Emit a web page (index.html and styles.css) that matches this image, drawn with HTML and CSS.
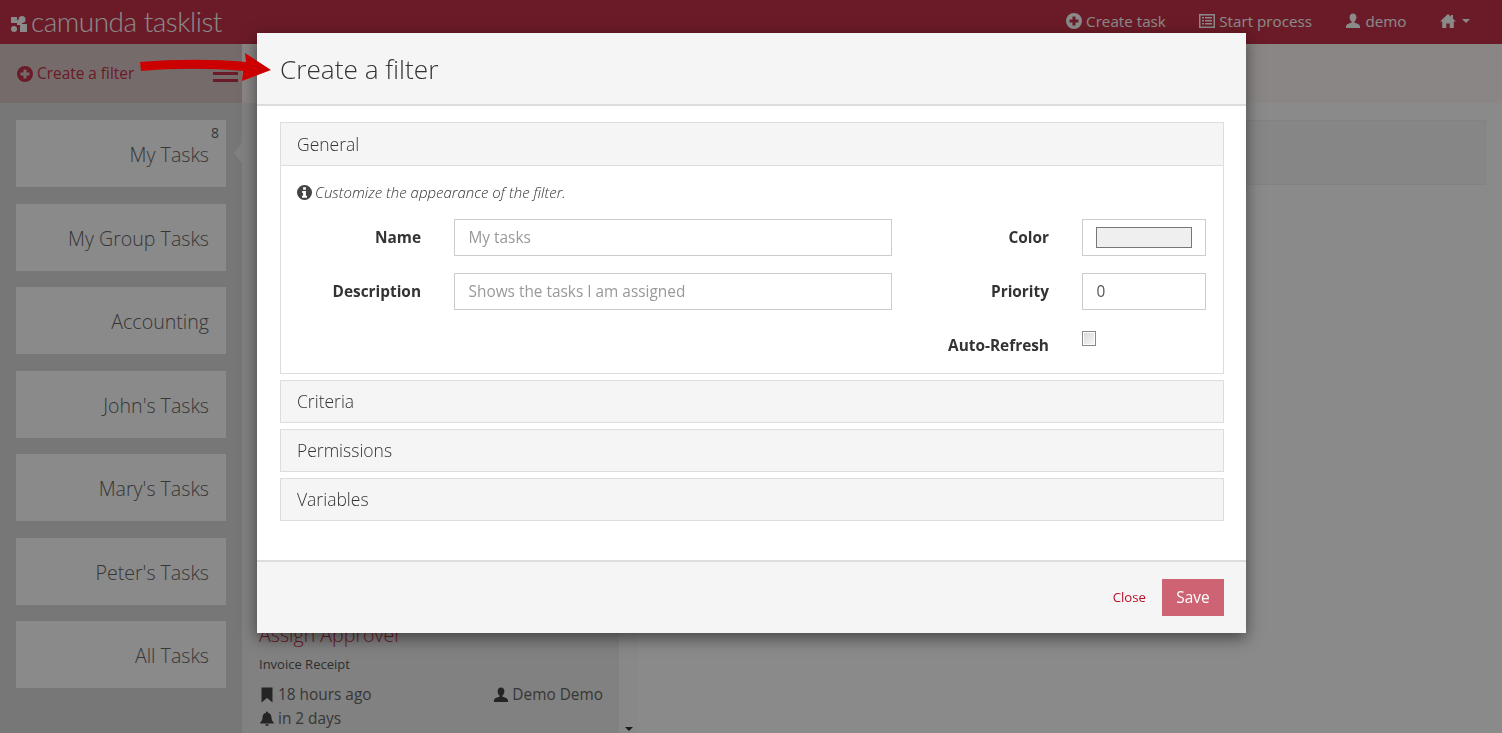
FILE: index.html
```html
<!DOCTYPE html>
<html lang="en">
<head>
    <meta charset="UTF-8">
    <title>Camunda Tasklist</title>
    <link rel="stylesheet" href="styles.css">
</head>
<body>

<svg class="defs" width="0" height="0">
    <symbol id="i-plus" viewBox="0 0 16 16"><path fill-rule="evenodd" d="M8 0a8 8 0 1 0 0 16A8 8 0 0 0 8 0zM6.500 3.500h3v3h3v3h-3v3h-3v-3h-3v-3h3z"/></symbol>
    <symbol id="i-info" viewBox="0 0 16 16"><path fill-rule="evenodd" d="M8 0a8 8 0 1 0 0 16A8 8 0 0 0 8 0zM6.500 2.500h3v2.500h-3zM5.500 6.500h4v5h1.200v2h-5.400v-2h1.200v-3h-1z"/></symbol>
    <symbol id="i-list" viewBox="0 0 16 16"><path fill-rule="evenodd" d="M0 1h16v14H0zM1.500 2.500v11h13v-11zM3 4h2v1.500H3zM6 4h7v1.500H6zM3 7h2v1.500H3zM6 7h7v1.500H6zM3 10h2v1.500H3zM6 10h7v1.500H6z"/></symbol>
    <symbol id="i-user" viewBox="0 0 16 16"><path d="M8 .5c2.100 0 3.400 1.500 3.400 3.700 0 1.800-.8 3.300-1.900 4.200v1.300c2.600.7 5.500 1.600 5.500 3.800v1.500H1v-1.500c0-2.200 2.900-3.100 5.500-3.800V8.400C5.400 7.500 4.600 6 4.600 4.200 4.600 2 5.900.5 8 .5z"/></symbol>
    <symbol id="i-home" viewBox="0 0 16 16"><path d="M8 1l3 2.800V2h2v3.700L16 8.500h-2.200V15H9.700v-4.500H6.300V15H2.200V8.500H0z"/></symbol>
    <symbol id="i-bookmark" viewBox="0 0 16 16"><path d="M2.500 .5h11v15L8 11l-5.500 4.500z"/></symbol>
    <symbol id="i-bell" viewBox="0 0 16 16"><path d="M8 .5a1.100 1.100 0 0 1 1.100 1.200c2.400.6 3.300 2.500 3.400 4.800.1 2.700 1 3.900 2.200 4.900v1.100H1.300v-1.100c1.200-1 2.100-2.200 2.200-4.900.1-2.300 1-4.200 3.400-4.800A1.100 1.100 0 0 1 8 .5zM6.200 13.300h3.600a1.800 1.800 0 0 1-3.600 0z"/></symbol>
</svg>

<header class="navbar">
    <div class="brand">
        <svg class="brand-logo" viewBox="0 0 16 16" width="16" height="16">
            <rect x="0" y="1" width="6" height="6"/>
            <circle cx="11" cy="3.500" r="3.500"/>
            <rect x="6" y="4" width="5" height="5"/>
            <circle cx="3" cy="13" r="3"/>
            <rect x="9" y="8" width="7" height="8"/>
        </svg>
        <span>camunda tasklist</span>
    </div>
    <nav class="nav-links">
        <a><svg class="icon"><use href="#i-plus"/></svg>Create task</a>
        <a><svg class="icon"><use href="#i-list"/></svg>Start process</a>
        <a><svg class="icon"><use href="#i-user"/></svg>demo</a>
        <a class="home-link"><svg class="icon"><use href="#i-home"/></svg><span class="caret"></span></a>
    </nav>
</header>

<div class="subbar">
    <div class="subbar-left">
        <a class="create-filter"><svg class="icon"><use href="#i-plus"/></svg>Create a filter</a>
        <span class="hamburger"></span>
    </div>
</div>

<div class="columns">
    <aside class="filters">
        <div class="filter active"><span class="count">8</span>My Tasks</div>
        <div class="filter">My Group Tasks</div>
        <div class="filter">Accounting</div>
        <div class="filter">John's Tasks</div>
        <div class="filter">Mary's Tasks</div>
        <div class="filter">Peter's Tasks</div>
        <div class="filter">All Tasks</div>
    </aside>
    <section class="tasks">
        <div class="task">
            <h4>Assign Approver</h4>
            <p class="process">Invoice Receipt</p>
            <div class="task-meta">
                <span><svg class="icon"><use href="#i-bookmark"/></svg>18 hours ago</span>
                <span><svg class="icon"><use href="#i-user"/></svg>Demo Demo</span>
            </div>
            <div class="task-meta">
                <span><svg class="icon"><use href="#i-bell"/></svg>in 2 days</span>
            </div>
        </div>
    </section>
    <div class="scroller"><span class="scroll-down"></span></div>
    <main class="detail">
        <div class="detail-box"></div>
    </main>
</div>

<div class="backdrop"></div>

<div class="modal">
    <div class="modal-header">
        <h3>Create a filter</h3>
    </div>
    <div class="modal-body">
        <div class="panel">
            <div class="panel-heading">General</div>
            <div class="panel-body">
                <p class="hint"><svg class="icon"><use href="#i-info"/></svg><em>Customize the appearance of the filter.</em></p>
                <form class="filter-form">
                    <label>Name</label>
                    <input type="text" placeholder="My tasks">
                    <label>Color</label>
                    <input type="color" value="#efefef">

                    <label>Description</label>
                    <input type="text" placeholder="Shows the tasks I am assigned">
                    <label>Priority</label>
                    <input type="text" value="0">

                    <label class="refresh-label">Auto-Refresh</label>
                    <input class="refresh-box" type="checkbox">
                </form>
            </div>
        </div>
        <div class="panel"><div class="panel-heading closed">Criteria</div></div>
        <div class="panel"><div class="panel-heading closed">Permissions</div></div>
        <div class="panel"><div class="panel-heading closed">Variables</div></div>
    </div>
    <div class="modal-footer">
        <a class="close-link">Close</a>
        <button type="button" class="save-btn">Save</button>
    </div>
</div>

<svg class="annotation" width="140" height="34" viewBox="136 50 140 34">
    <path d="M140 62C175 59 215 59 246 62L245 53 271 70 242 81 243 71C210 68 175 68 141 71z"/>
</svg>

</body>
</html>
```

FILE: styles.css
```css
* {
    box-sizing: border-box;
}

html, body {
    height: 100%;
}

body {
    margin: 0;
    font-family: "Open Sans", sans-serif;
    font-size: 15.400px;
    color: #333;
    background-color: #fff;
    overflow: hidden;
}

.defs {
    display: block;
    height: 0;
}

.icon {
    width: 16px;
    height: 16px;
    fill: currentColor;
    flex: none;
}

/* top bar */
.navbar {
    height: 44px;
    background-color: #c63248;
    color: #fff;
    display: flex;
    justify-content: space-between;
    align-items: center;
    padding: 0 32px 2px 11px;
}

.brand {
    display: flex;
    align-items: center;
    gap: 4px;
    font-family: "Lato", sans-serif;
    font-weight: 300;
    font-size: 28px;
    letter-spacing: -0.500px;
}

.brand-logo {
    fill: #fff;
    margin-top: 6px;
}

.nav-links {
    display: flex;
    gap: 33.500px;
    font-size: 15.200px;
}

.nav-links a {
    display: flex;
    align-items: center;
    gap: 4px;
}

.nav-links .home-link {
    gap: 6px;
}

.caret {
    width: 0;
    height: 0;
    border-top: 4px solid #fff;
    border-left: 4px solid transparent;
    border-right: 4px solid transparent;
}

/* bar under the top bar */
.subbar {
    height: 59px;
    background-color: #fff8f8;
}

.subbar-left {
    width: 242px;
    height: 100%;
    background-color: #d9c6c6;
    display: flex;
    justify-content: space-between;
    align-items: center;
    padding: 0 4px 0 17px;
}

.create-filter {
    display: flex;
    align-items: center;
    gap: 4px;
    color: #c63248;
}

.hamburger {
    width: 25px;
    height: 10px;
    margin-top: 6px;
    border-top: 3px solid #c63248;
    border-bottom: 3px solid #c63248;
}

/* columns */
.columns {
    display: flex;
    height: 630px;
}

.filters {
    width: 242px;
    background-color: #dcdcdc;
    padding: 17px 16px 0;
    display: flex;
    flex-direction: column;
    gap: 16.500px;
}

.filter {
    position: relative;
    height: 67px;
    background-color: #fff;
    text-align: right;
    font-size: 19.600px;
    font-weight: 300;
    line-height: 69px;
    padding-right: 17px;
    color: #666;
}

.count {
    position: absolute;
    top: 5px;
    right: 7px;
    font-size: 14px;
    font-weight: 400;
    line-height: 16px;
}

.filter.active::after {
    content: "";
    position: absolute;
    right: -16px;
    top: 23px;
    border: 10px solid transparent;
    border-right: 8px solid #eee;
    border-left: 0;
    margin-right: 0;
}

.tasks {
    width: 377px;
    background-color: #eee;
    padding: 518px 16px 0 17px;
}

.task h4 {
    margin: 0;
    font-size: 19.600px;
    font-weight: 300;
    line-height: 27px;
    color: #c63248;
}

.process {
    margin: 8px 0 10px;
    font-size: 13px;
    line-height: 17px;
    color: #555;
}

.task-meta {
    display: flex;
    justify-content: space-between;
    line-height: 24px;
    color: #666;
}

.task-meta .icon {
    color: #444;
}

.task-meta span {
    display: flex;
    align-items: center;
    gap: 3px;
}

.scroller {
    position: relative;
    width: 19px;
    background-color: #fbfbfb;
}

.scroll-down {
    position: absolute;
    left: 6px;
    bottom: 2px;
    border-top: 4px solid #333;
    border-left: 4px solid transparent;
    border-right: 4px solid transparent;
}

.detail {
    flex: 1;
    padding: 17px 16px;
    background-color: #fff;
}

.detail-box {
    height: 65px;
    background-color: #f8f8f8;
    border: 1px solid #f0f0f0;
}

/* modal */
.backdrop {
    position: fixed;
    inset: 0;
    background-color: rgba(0, 0, 0, 0.46);
}

.modal {
    position: absolute;
    left: 257px;
    top: 33px;
    width: 989px;
    height: 600px;
    background-color: #fff;
    box-shadow: 0 5px 15px rgba(0, 0, 0, 0.5);
    display: flex;
    flex-direction: column;
}

.modal-header {
    height: 73px;
    padding: 0 23px;
    background-color: #f5f5f5;
    border-bottom: 2px solid #ddd;
    display: flex;
    align-items: center;
}

.modal-header h3 {
    margin: 0;
    font-size: 26.200px;
    font-weight: 300;
    color: #333;
}

.modal-body {
    flex: 1;
    padding: 16px 22px 0 23px;
    display: flex;
    flex-direction: column;
    gap: 6px;
}

.panel {
    border: 1px solid #ddd;
}

.panel-heading {
    height: 43px;
    padding: 0 16px;
    background-color: #f5f5f5;
    border-bottom: 1px solid #ddd;
    font-size: 17.500px;
    font-weight: 300;
    color: #333;
    display: flex;
    align-items: center;
}

.panel-heading.closed {
    border-bottom: 0;
    height: 41px;
    padding-bottom: 2px;
}

.panel-body {
    padding: 17px 16px 0;
    height: 207px;
}

.hint {
    margin: 0 0 17px;
    display: flex;
    align-items: center;
    gap: 3px;
    font-size: 15px;
    line-height: 19px;
    font-weight: 300;
}

.hint .icon {
    width: 15px;
    height: 15px;
    color: #444;
}

.filter-form {
    display: grid;
    grid-template-columns: 124px 438px 124px 124px;
    column-gap: 33px;
    row-gap: 17px;
    align-items: center;
}

.filter-form label {
    text-align: right;
    font-weight: 700;
}

.filter-form input[type="text"],
.filter-form input[type="color"] {
    height: 37px;
    width: 100%;
    padding: 0 13.500px;
    border: 1px solid #ccc;
    background-color: #fff;
    font-family: inherit;
    font-size: 15.400px;
    color: #555;
}

.filter-form input[type="color"] {
    padding: 7px 13px;
}

.filter-form input::-webkit-color-swatch-wrapper {
    padding: 0;
}

.filter-form input::-webkit-color-swatch {
    border: 1px solid #777;
    border-radius: 0;
}

.filter-form input::placeholder {
    color: #999;
}

.refresh-label {
    grid-column: 3;
    align-self: start;
    margin-top: 8px;
}

.refresh-box {
    grid-column: 4;
    appearance: none;
    margin: 4px 0 0;
    width: 14px;
    height: 15px;
    align-self: start;
    border: 1px solid #888;
    background: linear-gradient(135deg, #d8d8d8, #f8f8f8);
    box-shadow: inset 0 0 0 1px #fff;
}

.modal-footer {
    height: 73px;
    background-color: #f5f5f5;
    border-top: 2px solid #ddd;
    display: flex;
    justify-content: flex-end;
    align-items: center;
    gap: 16px;
    padding: 0 22px;
}

.close-link {
    font-size: 13.200px;
    color: #b70f2a;
    margin-bottom: 2px;
}

.save-btn {
    width: 62px;
    height: 37px;
    border: 0;
    background-color: #cd6373;
    color: #fff;
    font-family: inherit;
    font-size: 15.400px;
}

.annotation {
    position: absolute;
    left: 136px;
    top: 50px;
    fill: #cc0000;
}
```
